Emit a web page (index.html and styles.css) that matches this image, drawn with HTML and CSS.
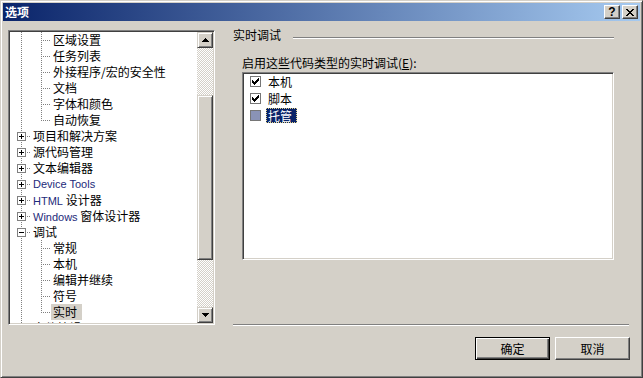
FILE: index.html
```html
<!DOCTYPE html>
<html lang="zh-CN">
<head>
<meta charset="utf-8">
<title>选项</title>
<link rel="stylesheet" href="styles.css">
</head>
<body>
<div class="window">
  <div class="titlebar">
    <span class="title-text">选项</span>
    <div class="title-btns">
      <span class="tbtn help">?</span>
      <span class="tbtn">
        <svg width="8" height="7" viewBox="0 0 8 7" shape-rendering="crispEdges"><path d="M0 0h2v1h-2z M6 0h2v1h-2z M1 1h2v1h-2z M5 1h2v1h-2z M2 2h4v1h-4z M3 3h2v1h-2z M2 4h4v1h-4z M1 5h2v1h-2z M5 5h2v1h-2z M0 6h2v1h-2z M6 6h2v1h-2z" fill="#000"/></svg>
      </span>
    </div>
  </div>
  <div class="client">
    <div class="main">
      <div class="tree">
        <div class="tree-items">
          <div class="row"><span class="g v"></span><span class="g t"></span><span class="lbl">区域设置</span></div>
          <div class="row"><span class="g v"></span><span class="g t"></span><span class="lbl">任务列表</span></div>
          <div class="row"><span class="g v"></span><span class="g t"></span><span class="lbl">外接程序/宏的安全性</span></div>
          <div class="row"><span class="g v"></span><span class="g t"></span><span class="lbl">文档</span></div>
          <div class="row"><span class="g v"></span><span class="g t"></span><span class="lbl">字体和颜色</span></div>
          <div class="row"><span class="g v"></span><span class="g l"></span><span class="lbl">自动恢复</span></div>
          <div class="row"><span class="g tb"><span class="pm"></span></span><span class="lbl">项目和解决方案</span></div>
          <div class="row"><span class="g tb"><span class="pm"></span></span><span class="lbl">源代码管理</span></div>
          <div class="row"><span class="g tb"><span class="pm"></span></span><span class="lbl">文本编辑器</span></div>
          <div class="row"><span class="g tb"><span class="pm"></span></span><span class="lbl lat">Device Tools</span></div>
          <div class="row"><span class="g tb"><span class="pm"></span></span><span class="lbl"><span class="lat">HTML</span> 设计器</span></div>
          <div class="row"><span class="g tb"><span class="pm"></span></span><span class="lbl"><span class="lat">Windows</span> 窗体设计器</span></div>
          <div class="row"><span class="g tb"><span class="pm minus"></span></span><span class="lbl">调试</span></div>
          <div class="row"><span class="g v"></span><span class="g t"></span><span class="lbl">常规</span></div>
          <div class="row"><span class="g v"></span><span class="g t"></span><span class="lbl">本机</span></div>
          <div class="row"><span class="g v"></span><span class="g t"></span><span class="lbl">编辑并继续</span></div>
          <div class="row"><span class="g v"></span><span class="g t"></span><span class="lbl">符号</span></div>
          <div class="row"><span class="g v"></span><span class="g l"></span><span class="lbl sel">实时</span></div>
          <div class="row"><span class="g tb"><span class="pm"></span></span><span class="lbl">文件编辑器</span></div>
        </div>
        <div class="scrollbar">
          <div class="sbtn">
            <svg width="7" height="4" viewBox="0 0 7 4" shape-rendering="crispEdges"><path d="M3 0h1v1h1v1h1v1h1v1H0v-1h1v-1h1v-1h1z" fill="#000"/></svg>
          </div>
          <div class="track track-top"></div>
          <div class="thumb"></div>
          <div class="track"></div>
          <div class="sbtn">
            <svg width="7" height="4" viewBox="0 0 7 4" shape-rendering="crispEdges"><path d="M0 0h7v1h-1v1h-1v1h-1v1h-1v-1h-1v-1h-1v-1h-1z" fill="#000"/></svg>
          </div>
        </div>
      </div>
      <div class="right">
        <div class="group-head">
          <span class="group-title">实时调试</span>
          <span class="etched"></span>
        </div>
        <div class="desc">启用这些代码类型的实时调试(<u>E</u>):</div>
        <div class="listbox">
          <div class="lrow">
            <span class="chk"><svg width="7" height="7" viewBox="0 0 7 7" shape-rendering="crispEdges"><path d="M0 2h1v3h-1z M1 3h1v3h-1z M2 4h1v3h-1z M3 3h1v3h-1z M4 2h1v3h-1z M5 1h1v3h-1z M6 0h1v3h-1z" fill="#000"/></svg></span>
            <span class="ltext">本机</span>
          </div>
          <div class="lrow">
            <span class="chk"><svg width="7" height="7" viewBox="0 0 7 7" shape-rendering="crispEdges"><path d="M0 2h1v3h-1z M1 3h1v3h-1z M2 4h1v3h-1z M3 3h1v3h-1z M4 2h1v3h-1z M5 1h1v3h-1z M6 0h1v3h-1z" fill="#000"/></svg></span>
            <span class="ltext">脚本</span>
          </div>
          <div class="lrow">
            <span class="chk selchk"></span>
            <span class="ltext selected">托管</span>
          </div>
        </div>
        <div class="sep"></div>
      </div>
    </div>
    <div class="buttons">
      <div class="btn default">确定</div>
      <div class="btn">取消</div>
    </div>
  </div>
</div>
</body>
</html>
```
FILE: styles.css
```css
* { box-sizing: border-box; }
html, body { margin: 0; padding: 0; }
body {
  width: 643px;
  height: 378px;
  overflow: hidden;
  background: #D4D0C8;
  font-family: "Noto Sans CJK SC", "Noto Sans", sans-serif;
  font-size: 12px;
  color: #000;
}
.window {
  width: 643px;
  height: 378px;
  border: 1px solid;
  border-color: #D4D0C8 #404040 #404040 #D4D0C8;
  box-shadow: inset 1px 1px #fff, inset -1px -1px #808080;
  padding: 2px;
  display: flex;
  flex-direction: column;
}
.titlebar {
  height: 18px;
  flex: none;
  display: flex;
  align-items: center;
  background: linear-gradient(to right, #0A246A, #A6CAF0);
  padding-left: 2px;
}
.title-text {
  color: #fff;
  font-weight: bold;
  font-size: 12px;
  line-height: 18px;
}
.title-btns {
  margin-left: auto;
  display: flex;
  gap: 2px;
  padding-right: 2px;
}
.tbtn {
  width: 16px;
  height: 14px;
  background: #D4D0C8;
  border: 1px solid;
  border-color: #fff #404040 #404040 #fff;
  box-shadow: inset -1px -1px #808080;
  display: flex;
  align-items: center;
  justify-content: center;
}
.tbtn.help {
  font-family: "Liberation Sans", Arial, sans-serif;
  font-weight: bold;
  font-size: 12px;
  line-height: 12px;
}
.client {
  flex: 1;
  display: flex;
  flex-direction: column;
  padding: 9px 10px 0 5px;
}
.main {
  display: flex;
  height: 295px;
  flex: none;
}
.tree {
  width: 207px;
  height: 295px;
  flex: none;
  border: 1px solid;
  border-color: #808080 #fff #fff #808080;
  box-shadow: inset 1px 1px #404040, inset -1px -1px #D4D0C8;
  padding: 1px;
  display: flex;
}
.tree-items {
  flex: 1;
  background: #fff;
  padding-left: 1px;
  overflow: hidden;
}
.row {
  display: flex;
  height: 16px;
  align-items: center;
  white-space: nowrap;
}
.g {
  width: 20px;
  height: 16px;
  flex: none;
}
.g.v {
  background: repeating-linear-gradient(to bottom, #808080 0 1px, transparent 1px 2px) 10px 0 / 1px 16px no-repeat;
}
.g.t {
  background:
    repeating-linear-gradient(to right, #808080 0 1px, transparent 1px 2px) 12px 8px / 8px 1px no-repeat,
    repeating-linear-gradient(to bottom, #808080 0 1px, transparent 1px 2px) 10px 0 / 1px 16px no-repeat;
}
.g.l {
  background:
    repeating-linear-gradient(to right, #808080 0 1px, transparent 1px 2px) 12px 8px / 8px 1px no-repeat,
    repeating-linear-gradient(to bottom, #808080 0 1px, transparent 1px 2px) 10px 0 / 1px 9px no-repeat;
}
.g.tb {
  display: flex;
  align-items: flex-start;
  padding: 4px 0 0 6px;
  background:
    repeating-linear-gradient(to right, #808080 0 1px, transparent 1px 2px) 16px 8px / 4px 1px no-repeat,
    repeating-linear-gradient(to bottom, #808080 0 1px, transparent 1px 2px) 10px 0 / 1px 16px no-repeat;
}
.pm {
  width: 9px;
  height: 9px;
  border: 1px solid #808080;
  background:
    linear-gradient(#000, #000) center / 5px 1px no-repeat,
    linear-gradient(#000, #000) center / 1px 5px no-repeat,
    #fff;
}
.pm.minus {
  background:
    linear-gradient(#000, #000) center / 5px 1px no-repeat,
    #fff;
}
.lbl {
  padding: 0 2px;
  line-height: 16px;
  height: 16px;
}
.lat {
  font-family: "Liberation Sans", Arial, sans-serif;
  font-size: 11px;
  color: #1d2a7a;
}
.lbl.sel {
  background: #D4D0C8;
  padding-right: 5px;
}
.scrollbar {
  width: 16px;
  flex: none;
  display: flex;
  flex-direction: column;
  background: repeating-conic-gradient(#fff 0 25%, #D4D0C8 0 50%) 0 0 / 2px 2px;
}
.sbtn, .thumb {
  background: #D4D0C8;
  border: 1px solid;
  border-color: #D4D0C8 #404040 #404040 #D4D0C8;
  box-shadow: inset 1px 1px #fff, inset -1px -1px #808080;
}
.sbtn {
  height: 16px;
  flex: none;
  display: flex;
  align-items: center;
  justify-content: center;
}
.sbtn svg { display: block; }
.track-top { height: 75px; flex: none; }
.thumb { height: 165px; flex: none; }
.track { flex: 1; }
.right {
  margin-left: 18px;
  width: 396px;
  flex: none;
  display: flex;
  flex-direction: column;
}
.group-head {
  display: flex;
  align-items: flex-start;
  height: 12px;
  margin-top: -1px;
  width: 381px;
}
.group-title {
  line-height: 12px;
}
.etched {
  flex: 1;
  height: 2px;
  margin-left: 12px;
  margin-top: 8px;
  border-top: 1px solid #808080;
  border-bottom: 1px solid #fff;
}
.desc {
  margin: 16px 0 0 9px;
  line-height: 12px;
  height: 12px;
}
.desc u { text-decoration-thickness: 1px; }
.listbox {
  margin: 3px 0 0 9px;
  width: 372px;
  height: 188px;
  border: 1px solid;
  border-color: #808080 #fff #fff #808080;
  box-shadow: inset 1px 1px #404040, inset -1px -1px #D4D0C8;
  padding: 1px;
  background: #fff;
  background-clip: padding-box;
}
.lrow {
  display: flex;
  align-items: flex-start;
  height: 17px;
  padding-left: 6px;
}
.chk {
  width: 11px;
  height: 11px;
  margin-top: 2px;
  border: 1px solid #767676;
  background: #fff;
  flex: none;
  display: flex;
  padding: 1px;
}
.chk svg { display: block; }
.chk.selchk { background: #8A93B6; }
.ltext {
  margin-left: 7px;
  line-height: 15px;
  height: 15px;
}
.ltext.selected {
  margin-left: 5px;
  padding: 0 4px 0 1px;
  background: #0A246A;
  color: #fff;
  border: 1px dotted #E2D38A;
  line-height: 13px;
  margin-top: 0;
}
.sep {
  margin-top: auto;
  margin-bottom: -1px;
  height: 2px;
  border-top: 1px solid #808080;
  border-bottom: 1px solid #fff;
}
.buttons {
  display: flex;
  justify-content: flex-end;
  gap: 5px;
  margin-top: 12px;
}
.btn {
  width: 75px;
  height: 23px;
  border: 1px solid;
  border-color: #fff #404040 #404040 #fff;
  box-shadow: inset -1px -1px #808080;
  display: flex;
  align-items: center;
  justify-content: center;
  line-height: 12px;
}
.btn.default {
  border-color: #000;
  box-shadow: inset 1px 1px #fff, inset -1px -1px #404040, inset -2px -2px #808080;
}
```
